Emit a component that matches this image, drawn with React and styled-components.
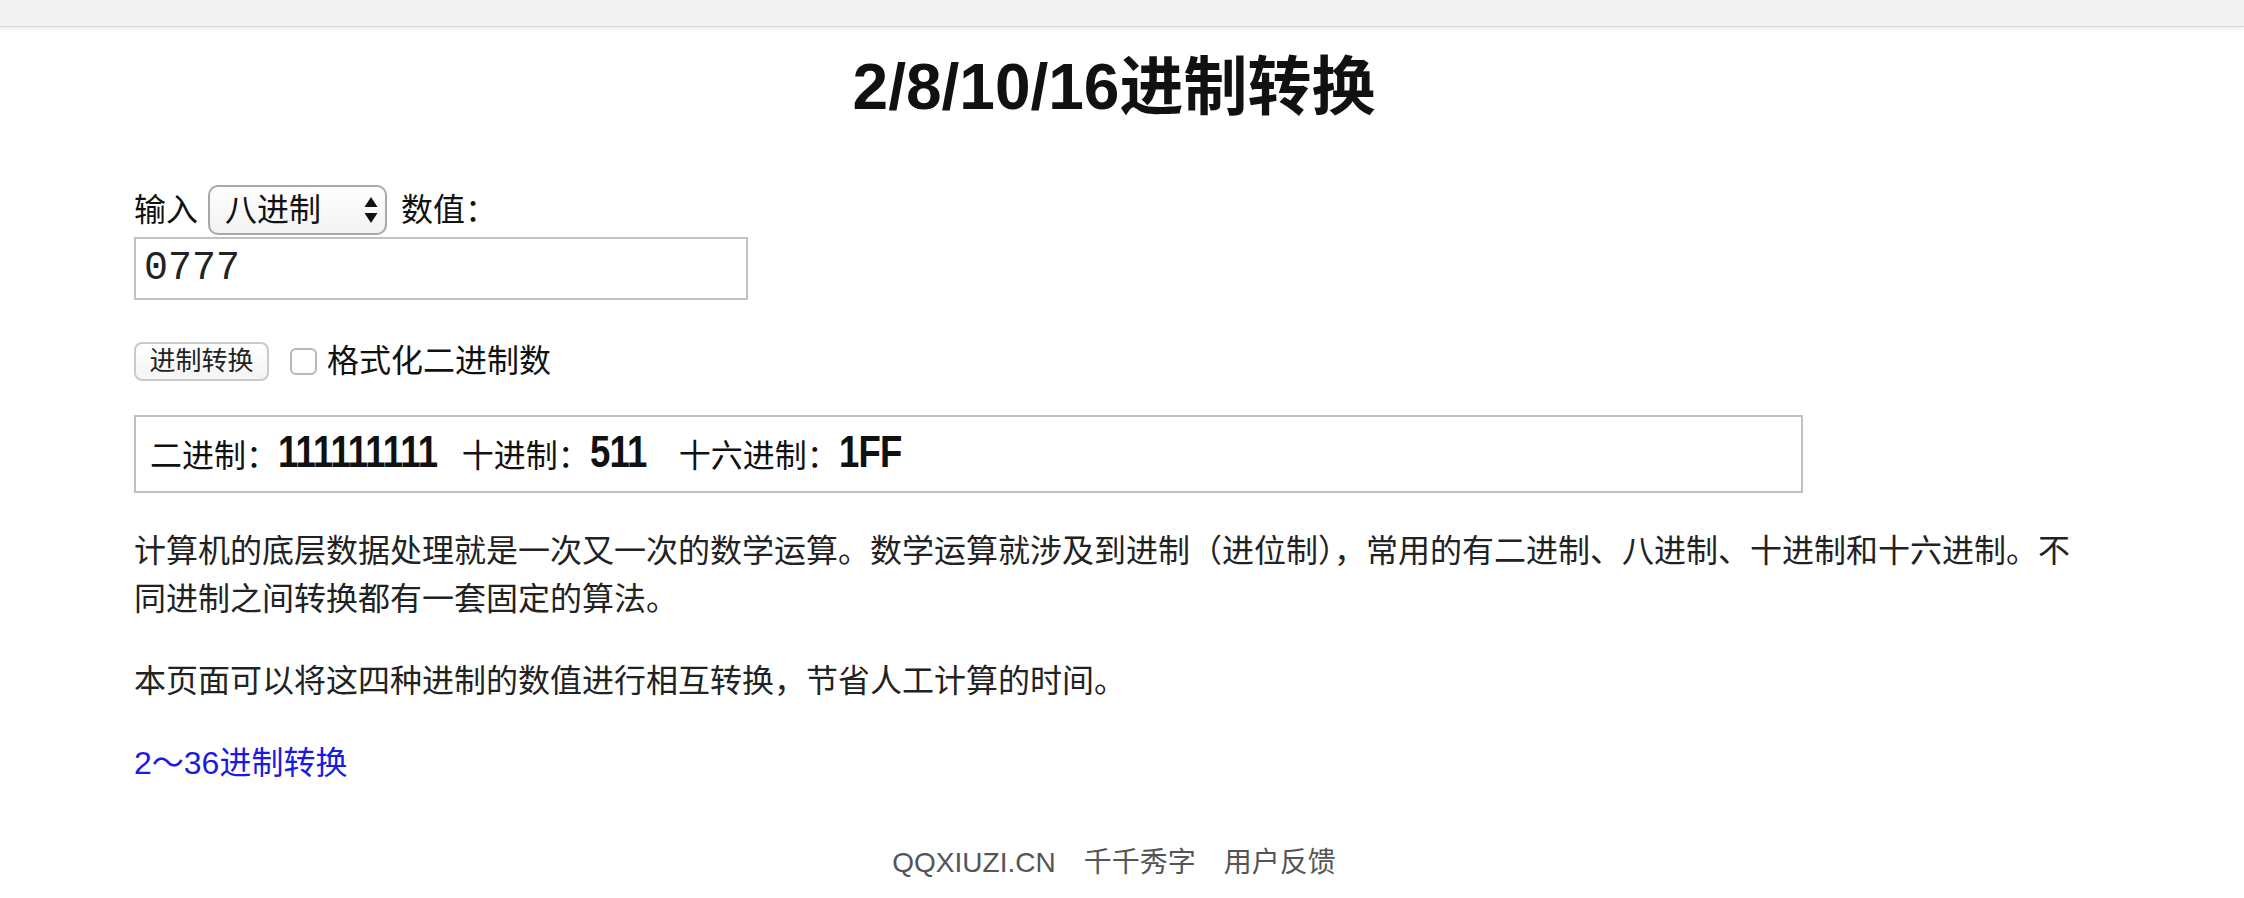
import React from 'react'
import styled, { createGlobalStyle } from 'styled-components'

const GlobalStyle = createGlobalStyle`
  html, body {
    margin: 0;
    padding: 0;
    background: #fff;
  }
  body {
    font-family: "Liberation Sans", "Noto Sans CJK SC", sans-serif;
    color: #222;
  }
`

const TopBar = styled.div`
  height: 26px;
  background: #f3f3f3;
  border-bottom: 1px solid #d6d6d6;
  box-shadow: 0 2px 3px rgba(0, 0, 0, 0.08);
`

const Main = styled.div`
  width: 1960px;
  margin-left: 134px;
`

const Title = styled.h1`
  margin: 21px 0 59px;
  font-size: 64px;
  line-height: 78px;
  font-weight: 700;
  text-align: center;
  color: #111;
`

const InputRow = styled.div`
  display: flex;
  align-items: center;
  height: 50px;
  font-size: 32px;
  line-height: 50px;
  color: #111;
`

const SelectWrap = styled.div`
  position: relative;
  margin: 0 14px 0 10px;
  height: 50px;
`

const Select = styled.select`
  appearance: none;
  box-sizing: border-box;
  width: 179px;
  height: 50px;
  border: 2px solid #a8a8a8;
  border-radius: 10px;
  background: linear-gradient(#ffffff, #f2f2f2);
  font-family: inherit;
  font-size: 32px;
  color: #111;
  padding: 0 0 0 15px;
  outline: none;
`

const Arrows = styled.svg`
  position: absolute;
  right: 9px;
  top: 12px;
  pointer-events: none;
`

const ValueInput = styled.input`
  display: block;
  box-sizing: border-box;
  width: 614px;
  height: 63px;
  margin: 2px 0 0;
  border: 2px solid #c2c2c2;
  border-radius: 0;
  padding: 0 8px;
  font-family: "Liberation Mono", monospace;
  font-size: 40px;
  color: #222;
  outline: none;
`

const ActionRow = styled.div`
  display: flex;
  align-items: center;
  height: 39px;
  margin-top: 42px;
`

const Button = styled.button`
  box-sizing: border-box;
  width: 135px;
  height: 39px;
  padding: 0;
  border: 2px solid #cacaca;
  border-radius: 8px;
  background: linear-gradient(#ffffff, #f4f4f4);
  font-family: inherit;
  font-size: 26px;
  line-height: 35px;
  color: #222;
`

const Check = styled.input`
  appearance: none;
  box-sizing: border-box;
  width: 27px;
  height: 27px;
  margin: 0 10px 0 21px;
  border: 2px solid #b8b8b8;
  border-radius: 6px;
  background: #fff;
`

const CheckLabel = styled.label`
  font-size: 32px;
  line-height: 39px;
  color: #111;
`

const ResultBox = styled.div`
  box-sizing: border-box;
  width: 1669px;
  margin-top: 34px;
  border: 2px solid #c0c0c0;
  padding: 10px 14px;
  font-size: 32px;
  line-height: 49px;
  color: #111;
  white-space: nowrap;
`

const Value = styled.b`
  display: inline-block;
  font-size: 44px;
  font-weight: 700;
  letter-spacing: -1px;
  transform: scaleX(0.83);
  transform-origin: 0 50%;
  margin-right: ${p => p.$trim}px;
  color: #111;
`

const Text = styled.p`
  margin: 34px 0 0;
  font-size: 32px;
  line-height: 48px;
  color: #222;
`

const Link = styled.a`
  color: #1a1ae0;
  text-decoration: none;
`

const Footer = styled.div`
  display: flex;
  justify-content: center;
  gap: 28px;
  margin-top: 56px;
  font-size: 28px;
  line-height: 40px;
  color: #555;
`

export default function App() {
  return (
    <>
      <GlobalStyle />
      <TopBar />
      <Main>
        <Title>2/8/10/16进制转换</Title>

        <InputRow>
          输入
          <SelectWrap>
            <Select defaultValue="8">
              <option value="2">二进制</option>
              <option value="8">八进制</option>
              <option value="10">十进制</option>
              <option value="16">十六进制</option>
            </Select>
            <Arrows width="14" height="26" viewBox="0 0 14 26">
              <path d="M7 0 L13.5 10 H0.5 Z" fill="#111" />
              <path d="M0.5 16 H13.5 L7 26 Z" fill="#111" />
            </Arrows>
          </SelectWrap>
          数值：
        </InputRow>
        <ValueInput type="text" defaultValue="0777" />

        <ActionRow>
          <Button>进制转换</Button>
          <Check type="checkbox" id="fmt" />
          <CheckLabel htmlFor="fmt">格式化二进制数</CheckLabel>
        </ActionRow>

        <ResultBox>
          二进制：<Value $trim={-8}>111111111</Value>
          十进制：<Value $trim={21}>511</Value>
          十六进制：<Value $trim={0}>1FF</Value>
        </ResultBox>

        <Text>
          计算机的底层数据处理就是一次又一次的数学运算。数学运算就涉及到进制（进位制），常用的有二进制、八进制、十进制和十六进制。不同进制之间转换都有一套固定的算法。
        </Text>
        <Text>本页面可以将这四种进制的数值进行相互转换，节省人工计算的时间。</Text>
        <Text>
          <Link href="#">2～36进制转换</Link>
        </Text>

        <Footer>
          <span>QQXIUZI.CN</span>
          <span>千千秀字</span>
          <span>用户反馈</span>
        </Footer>
      </Main>
    </>
  )
}
